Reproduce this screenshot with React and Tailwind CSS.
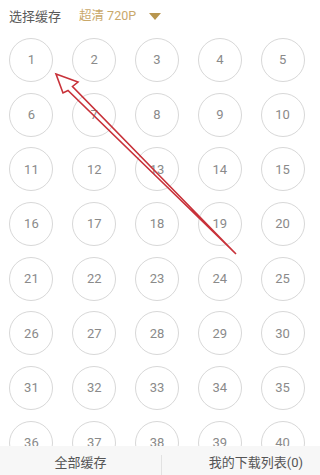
import React from 'react';

const NUMS = Array.from({ length: 40 }, (_, i) => i + 1);

export default function App() {
  return (
    <div
      className="relative w-[320px] h-[475px] overflow-hidden bg-white"
      style={{ fontFamily: 'Roboto, "Noto Sans CJK SC", sans-serif' }}
    >
      {/* Header */}
      <div className="flex items-center h-[33px] pl-[9px]">
        <span className="text-[13px] text-[#5a5a5a] leading-none">选择缓存</span>
        <span className="ml-[18px] text-[12.5px] text-[#c9a86a] leading-none">超清 720P</span>
        <span className="ml-[13px] w-0 h-0 border-l-[6px] border-r-[6px] border-t-[7px] border-l-transparent border-r-transparent border-t-[#b8964e]" />
      </div>

      {/* Episode grid */}
      <div className="grid grid-cols-5 w-[314px] gap-y-[10.7px] pt-[5px]">
        {NUMS.map((n) => (
          <div key={n} className="flex justify-center">
            <div className="w-[44px] h-[44px] rounded-full border-[1.7px] border-[#d8d8d8] flex items-center justify-center text-[13px] text-[#8a8a8a]">
              {n}
            </div>
          </div>
        ))}
      </div>

      {/* Annotation arrow */}
      <svg className="absolute left-0 top-0 pointer-events-none" width="320" height="475">
        <polygon
          points="56,74 78,82 72.5,86.5 236,254 68,90.5 63,93"
          fill="none"
          stroke="#c8323a"
          strokeWidth="1.6"
          strokeLinejoin="miter"
        />
      </svg>

      {/* Bottom bar */}
      <div className="absolute left-0 bottom-0 w-full h-[29px] bg-[#f7f7f7] flex items-center">
        <div className="w-[161px] text-center text-[13px] text-[#555] pt-[4px]">全部缓存</div>
        <div className="w-px h-[20px] self-end bg-[#e2e2e2]" />
        <div className="flex-1 text-right pr-[17px] text-[13px] text-[#555] pt-[4px]">我的下载列表(0)</div>
      </div>
    </div>
  );
}
